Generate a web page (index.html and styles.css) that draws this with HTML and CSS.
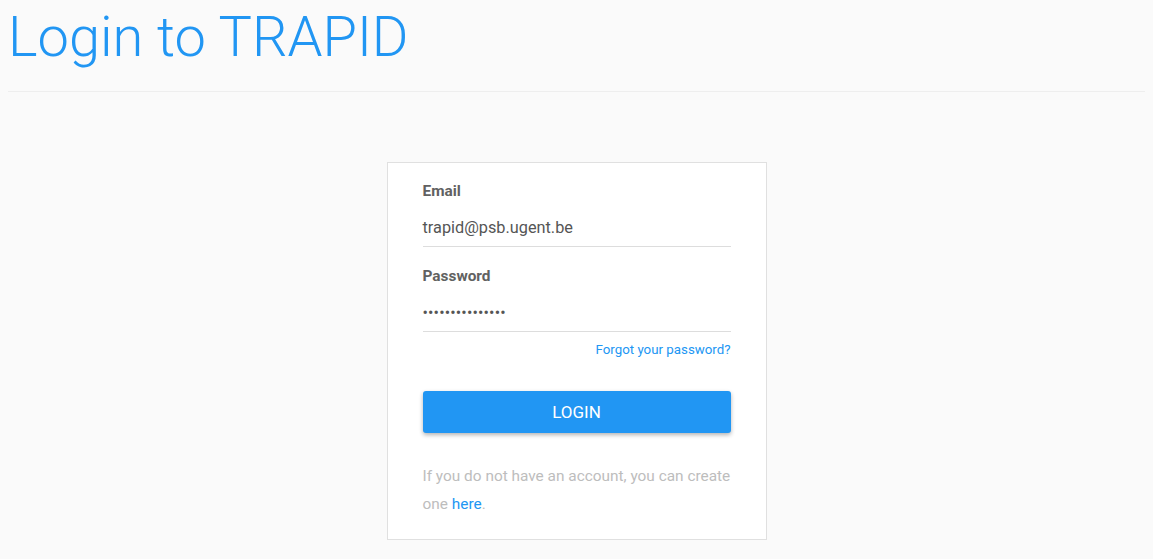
FILE: index.html
```html
<!DOCTYPE html>
<html>
<head>
<meta charset="utf-8">
<link rel="stylesheet" href="styles.css">
</head>
<body>
<h1 class="title">Login to TRAPID</h1>
<hr class="rule">
<div class="wrap">
  <form class="card">
    <label class="label">Email</label>
    <div class="field">trapid@psb.ugent.be</div>
    <label class="label">Password</label>
    <div class="field dots">•••••••••••••••</div>
    <div class="forgot"><a href="#">Forgot your password?</a></div>
    <button class="btn" type="button">LOGIN</button>
    <p class="note">If you do not have an account, you can create one <a href="#">here</a>.</p>
  </form>
</div>
</body>
</html>
```
FILE: styles.css
```css
html, body { margin: 0; padding: 0; }
body {
  background: #fafafa;
  font-family: Roboto, "Liberation Sans", sans-serif;
  padding: 0 8px;
}
.title {
  margin: 0;
  padding-top: 2px;
  font-weight: 300;
  font-size: 56px;
  line-height: 70px;
  color: #2196f3;
}
.rule {
  margin: 19px 0 0;
  border: 0;
  border-top: 1px solid #eeeeee;
}
.wrap {
  display: flex;
  justify-content: center;
  padding-top: 70px;
}
.card {
  width: 308px;
  background: #fff;
  border: 1px solid #e0e0e0;
  padding: 18px 35px 21px 35px;
  display: flex;
  flex-direction: column;
}
.label {
  font-size: 15.4px;
  font-weight: 700;
  color: #616161;
  line-height: 20px;
}
.field {
  margin-top: 11px;
  font-size: 16.3px;
  color: #555;
  line-height: 24px;
  padding: 4px 0 6px;
  border-bottom: 1px solid #dddddd;
  margin-bottom: 19px;
}
.dots {
  font-size: 16px;
  letter-spacing: 0.15px;
}
.forgot {
  margin-top: -10px;
  text-align: right;
  font-size: 13.3px;
  line-height: 18px;
}
.forgot a, .note a { color: #2196f3; text-decoration: none; }
.btn {
  margin-top: 32px;
  height: 42px;
  border: 0;
  border-radius: 3px;
  background: #2196f3;
  color: #fff;
  font-family: inherit;
  font-size: 17px;
  box-shadow: 0 2px 4px rgba(0,0,0,0.3);
}
.note {
  margin: 29px 0 0;
  font-size: 15.4px;
  line-height: 28px;
  color: #bdbdbd;
}
```
